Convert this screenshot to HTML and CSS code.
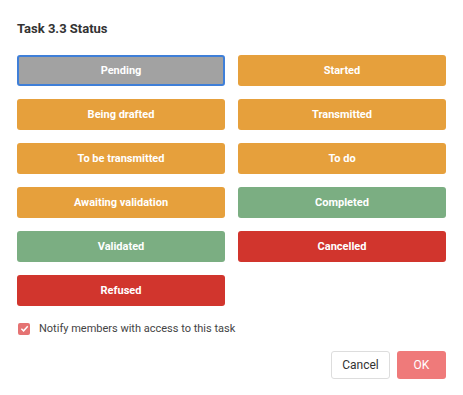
FILE: index.html
```html
<!DOCTYPE html>
<html>
    <head>
        <title>Task status</title>
        <link rel="stylesheet" href="styles.css">
    </head>
    <body>
        <div class="dialog">
            <h1 class="title">Task 3.3 Status</h1>
            <div class="status-grid">
                <button class="status gray selected">Pending</button>
                <button class="status orange">Started</button>
                <button class="status orange">Being drafted</button>
                <button class="status orange">Transmitted</button>
                <button class="status orange">To be transmitted</button>
                <button class="status orange">To do</button>
                <button class="status orange">Awaiting validation</button>
                <button class="status green">Completed</button>
                <button class="status green">Validated</button>
                <button class="status red">Cancelled</button>
                <button class="status red">Refused</button>
            </div>
            <label class="notify">
                <span class="check">
                    <svg width="9" height="9" viewBox="0 0 10 10"><path d="M1.5 5.2 L4 7.6 L8.6 2.4" fill="none" stroke="#fff" stroke-width="1.6"/></svg>
                </span>
                Notify members with access to this task
            </label>
            <div class="actions">
                <button class="btn cancel">Cancel</button>
                <button class="btn ok">OK</button>
            </div>
        </div>
    </body>
</html>
```
FILE: styles.css
```css
* {
    box-sizing: border-box;
}

body {
    margin: 0;
    font-family: Roboto, "Liberation Sans", Arial, sans-serif;
    background-color: #fff;
    color: #333;
}

.dialog {
    padding: 21px 17px 14px 17px;
}

.title {
    margin: 0 0 18px 0;
    font-size: 13px;
    font-weight: bold;
    line-height: 16px;
    color: #333;
}

.status-grid {
    display: grid;
    grid-template-columns: 208px 208px;
    column-gap: 13px;
    row-gap: 13px;
}

.status {
    height: 31px;
    border: none;
    border-radius: 3px;
    color: #fff;
    font-family: inherit;
    font-size: 11px;
    font-weight: bold;
    cursor: pointer;
}

.status.gray {
    background-color: #a2a2a2;
}

.status.selected {
    border: 2px solid #3f7fd8;
}

.status.orange {
    background-color: #e6a03c;
}

.status.green {
    background-color: #7bae82;
}

.status.red {
    background-color: #d1352d;
}

.notify {
    display: flex;
    align-items: center;
    margin: 16px 0 0 1px;
    font-size: 11px;
    color: #444;
}

.check {
    display: flex;
    align-items: center;
    justify-content: center;
    width: 12px;
    height: 12px;
    border-radius: 2px;
    background-color: #e57373;
    margin-right: 9px;
}

.actions {
    display: flex;
    justify-content: flex-end;
    gap: 7px;
    margin-top: 16px;
    padding-right: 0;
}

.btn {
    height: 28px;
    border-radius: 3px;
    font-family: inherit;
    font-size: 12px;
    cursor: pointer;
}

.cancel {
    width: 59px;
    background-color: #fff;
    border: 1px solid #ddd;
    color: #333;
}

.ok {
    width: 49px;
    background-color: #ef7a7a;
    border: none;
    color: #fff;
}
```
